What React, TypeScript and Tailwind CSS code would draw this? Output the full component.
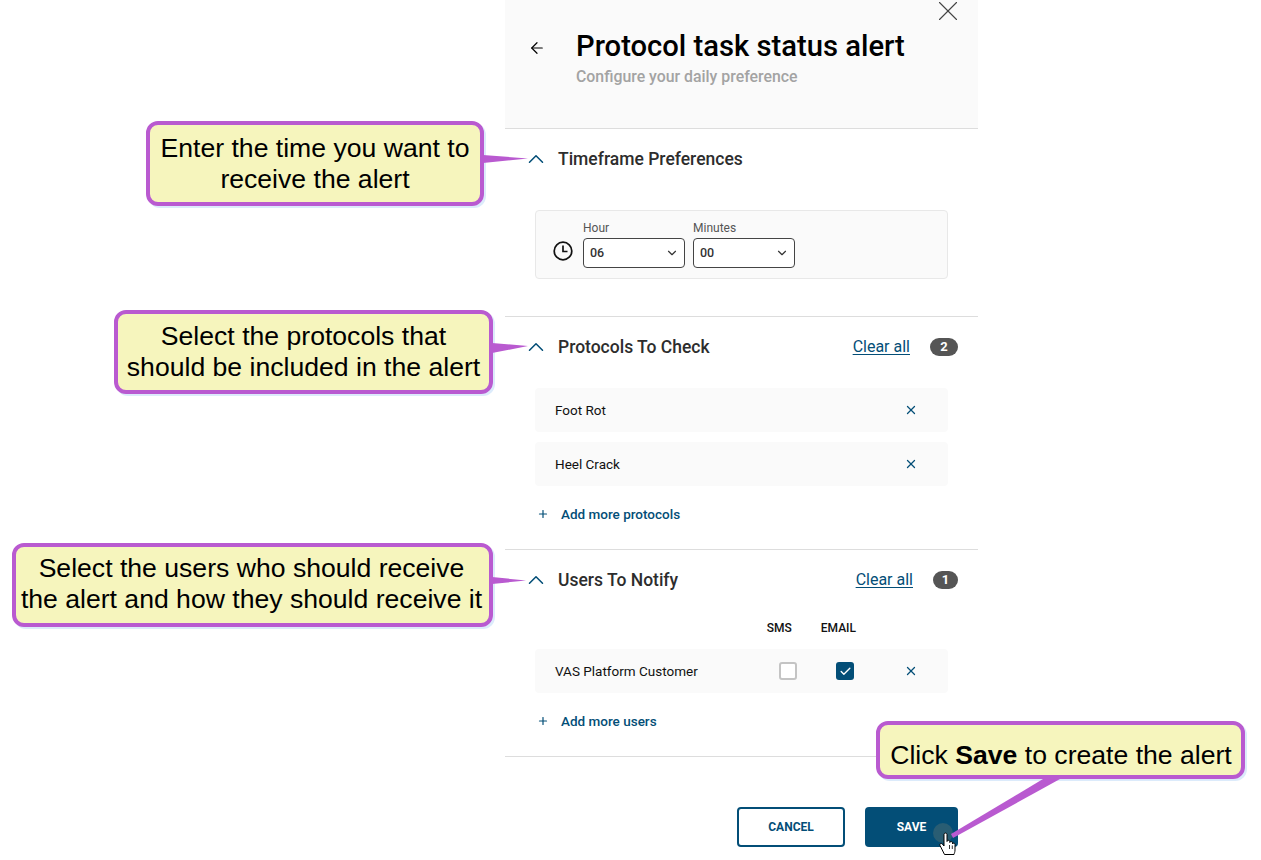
import { ArrowLeft, Check, ChevronDown, ChevronUp, Plus, X } from "lucide-react";
import type { ReactNode } from "react";

const BLUE = "text-[#034e77]";

function SectionHead({ title, count, badgeW }: { title: string; count?: number; badgeW?: string }) {
  return (
    <div className="flex items-center h-[60px] pl-[18px] pr-5">
      <ChevronUp size={26} strokeWidth={1.4} className={BLUE} />
      <div className="ml-[9px] flex-1 text-[17.5px] font-medium text-[#2d2d2d]">{title}</div>
      {count !== undefined && (
        <>
          <span className={`mr-5 text-[16px] underline underline-offset-2 ${BLUE}`}>Clear all</span>
          <span className={`flex items-center justify-center h-[18px] rounded-full bg-[#555555] text-white text-[13px] font-bold ${badgeW}`}>
            {count}
          </span>
        </>
      )}
    </div>
  );
}

function Row({ label, children }: { label: string; children?: ReactNode }) {
  return (
    <div className="flex items-center h-11 mx-[30px] pl-5 pr-[30px] rounded bg-[#fafafa] text-[13.5px] text-[#111111]">
      <div className="flex-1">{label}</div>
      {children}
      <X size={14} strokeWidth={2.2} className={BLUE} />
    </div>
  );
}

function AddMore({ label }: { label: string }) {
  return (
    <div className={`flex items-center mx-[30px] pl-[2px] text-[13.5px] font-medium ${BLUE}`}>
      <Plus size={12} strokeWidth={2.4} />
      <span className="ml-3">{label}</span>
    </div>
  );
}

function TimeSelect({ label, value }: { label: string; value: string }) {
  return (
    <div className="w-[102px]">
      <div className="text-[12px] leading-[14px] text-[#555555] mb-[3px]">{label}</div>
      <div className="flex items-center justify-between h-[30px] pl-[6px] pr-[5px] bg-white border border-[#444444] rounded text-[12.5px] font-medium text-[#333333]">
        {value}
        <ChevronDown size={14} strokeWidth={2} />
      </div>
    </div>
  );
}

function Callout({ className, children }: { className: string; children: ReactNode }) {
  return (
    <div
      className={`absolute flex items-center justify-center text-center font-['Liberation_Sans',sans-serif] text-[26.6px] leading-[31px] text-black bg-[#f6f5bd] border-[4px] border-[#b95ad0] rounded-xl shadow-[2px_2px_0_#dcebfb] ${className}`}
    >
      {children}
    </div>
  );
}

export default function App() {
  return (
    <div className="relative h-[860px] w-[1261px] overflow-hidden bg-white font-['Roboto',sans-serif]">
      <div className="ml-[505px] w-[473px]">
        <div className="relative h-[129px] bg-[#fafafa] border-b border-[#dddddd] pl-[71px] pt-[28px]">
          <ArrowLeft size={18} strokeWidth={1.6} className="absolute left-[23px] top-[39px] text-black" />
          <X size={34} strokeWidth={0.8} className="absolute right-[13px] -top-[6px] text-[#444444]" />
          <div className="text-[29.2px] leading-9 font-medium text-black">Protocol task status alert</div>
          <div className="mt-[1px] text-[15.85px] font-medium text-[#a3a3a3]">Configure your daily preference</div>
        </div>

        <div className="h-[188px] border-b border-[#dddddd]">
          <SectionHead title="Timeframe Preferences" />
          <div className="flex items-center gap-2 h-[69px] mx-[30px] mt-[21px] pl-4 rounded border border-[#e8e8e8] bg-[#fafafa]">
            <svg width="22" height="22" viewBox="0 0 22 22" fill="none" stroke="#111111" strokeWidth="1.7" className="mt-[13px] mr-[1px]">
              <circle cx="11" cy="11" r="8.8" />
              <path d="M11 5.5V11.5H15.5" />
            </svg>
            <TimeSelect label="Hour" value="06" />
            <TimeSelect label="Minutes" value="00" />
          </div>
        </div>

        <div className="h-[233px] border-b border-[#dddddd]">
          <SectionHead title="Protocols To Check" count={2} badgeW="w-[28px]" />
          <div className="mt-[11px] flex flex-col gap-[10px]">
            <Row label="Foot Rot" />
            <Row label="Heel Crack" />
          </div>
          <div className="mt-[18px]">
            <AddMore label="Add more protocols" />
          </div>
        </div>

        <div className="h-[207px] border-b border-[#dddddd]">
          <SectionHead title="Users To Notify" count={1} badgeW="w-[25px]" />
          <div className="flex justify-end gap-[29px] h-[19px] pr-[122px] mt-[9px] text-[12px] font-medium leading-[19px] text-[#111111]">
            <span>SMS</span>
            <span>EMAIL</span>
          </div>
          <div className="mt-[11px]">
            <Row label="VAS Platform Customer">
              <span className="w-[18px] h-[18px] rounded-[3px] border-2 border-[#c4c4c4] bg-white" />
              <span className="flex items-center justify-center w-[18px] h-[18px] ml-[39px] mr-[50px] rounded-[3px] bg-[#034e77] text-white">
                <Check size={13} strokeWidth={2.5} />
              </span>
            </Row>
          </div>
          <div className="mt-[18px]">
            <AddMore label="Add more users" />
          </div>
        </div>

        <div className="flex justify-end gap-5 pt-[50px] pr-5 text-[12px] font-bold">
          <button className={`w-[108px] h-10 rounded border-2 border-[#034e77] bg-white ${BLUE}`}>CANCEL</button>
          <button className="w-[93px] h-10 rounded bg-[#034e77] text-white">SAVE</button>
        </div>
      </div>

      {/* callouts sit over the panel */}
      <Callout className="left-[146px] top-[121px] w-[338px] h-[85px]">
        Enter the time you want to
        <br />
        receive the alert
      </Callout>
      <Callout className="left-[114px] top-[310px] w-[379px] h-[84px] pb-[1px]">
        Select the protocols that
        <br />
        should be included in the alert
      </Callout>
      <Callout className="left-[12px] top-[543px] w-[481px] h-[84px] pb-[2px] pr-[2px]">
        Select the users who should receive
        <br />
        the alert and how they should receive it
      </Callout>
      <Callout className="left-[876px] top-[721px] w-[369px] h-[58px] pt-[11px] pl-[1px]">
        <span>
          Click <b>Save</b> to create the alert
        </span>
      </Callout>

      <svg width="1261" height="860" className="absolute inset-0 pointer-events-none">
        <polygon points="483,155 528,158.5 483,163" fill="#b95ad0" />
        <polygon points="492,343 528,346 492,353" fill="#b95ad0" />
        <polygon points="492,577 526,580.5 492,584" fill="#b95ad0" />
        <circle cx="943" cy="833" r="10" fill="#295d73" />
        <polygon points="1043,779 1060,779 953,838 951,834" fill="#b95ad0" />
        <path
          d="M944.5 854.5l-4.5-9c-.8-1.6 1.2-2.8 2.4-1.4l1.6 1.9v-11.5c0-1.9 3-1.9 3 0v7c.4-1.7 2.8-1.5 2.8.2v.8c.5-1.5 2.7-1.3 2.7.4v1c.6-1.3 2.5-1 2.5.6v5.5c0 2.2-.7 3-1 4.5z"
          fill="#ffffff"
          stroke="#000000"
          strokeWidth="1"
        />
        <path d="M949.5 845v4M952.3 845.5v3.5" stroke="#000000" strokeWidth="0.8" />
      </svg>
    </div>
  );
}
